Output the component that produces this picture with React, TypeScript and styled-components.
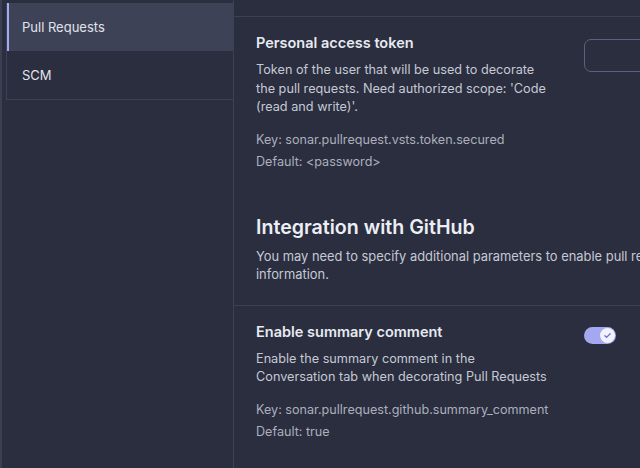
import React from 'react';
import styled, { createGlobalStyle } from 'styled-components';

const GlobalStyle = createGlobalStyle`
  html, body, #root {
    margin: 0;
    height: 100%;
  }
  body {
    background: #2a2e3f;
    font-family: Inter, "Noto Sans", "Liberation Sans", sans-serif;
    -webkit-font-smoothing: antialiased;
    overflow: hidden;
  }
`;

const Page = styled.div`
  display: flex;
  height: 468px;
  background: #2a2e3f;
  border-left: 2px solid #3a3f53;
  box-sizing: border-box;
  overflow: hidden;
`;

const Sidebar = styled.aside`
  width: 231px;
  flex-shrink: 0;
  padding: 3px 0 0 4px;
  box-sizing: border-box;
`;

const NavBox = styled.nav`
  display: flex;
  flex-direction: column;
  border-left: 1px solid #3c4156;
  border-bottom: 1px solid #3c4156;
`;

const NavItem = styled.div<{ $active?: boolean }>`
  height: 48px;
  display: flex;
  align-items: center;
  padding-left: 13px;
  font-size: 13px;
  color: #e1e3eb;
  background: ${p => (p.$active ? '#3d4257' : 'transparent')};
  border-left: 2px solid ${p => (p.$active ? '#a3aaf2' : 'transparent')};
`;

const Main = styled.main`
  flex: 1;
  min-width: 0;
  border-left: 1px solid #3c4156;
  overflow: hidden;
`;

const TopBar = styled.div`
  height: 16px;
  border-bottom: 1px solid #3c4156;
`;

const Setting = styled.section<{ $bordered?: boolean }>`
  display: grid;
  grid-template-columns: 296px 260px;
  column-gap: 32px;
  padding: 16px 0 0 22px;
  border-top: ${p => (p.$bordered ? '1px solid #3c4156' : 'none')};
`;

const SettingText = styled.div`
  display: flex;
  flex-direction: column;
`;

const SettingTitle = styled.h3`
  margin: 0;
  font-size: 14.5px;
  line-height: 20px;
  font-weight: 600;
  color: #e7e9f0;
`;

const Description = styled.p`
  margin: 8px 0 12px;
  font-size: 12.7px;
  line-height: 18.5px;
  color: #c6c9d4;
`;

const Meta = styled.div`
  font-size: 12.6px;
  line-height: 22px;
  color: #acafbc;
  white-space: nowrap;
`;

const TokenInput = styled.input`
  margin-top: 6px;
  height: 33px;
  width: 260px;
  box-sizing: border-box;
  background: transparent;
  border: 1px solid #5c6180;
  border-radius: 7px;
  outline: none;
`;

const Category = styled.div`
  padding: 40px 0 20px 22px;
`;

const CategoryTitle = styled.h2`
  margin: 0;
  font-size: 19.6px;
  line-height: 28px;
  font-weight: 600;
  color: #eceef4;
`;

const CategoryDescription = styled.p`
  margin: 7px 0 0;
  font-size: 12.9px;
  line-height: 18.5px;
  color: #c6c9d4;
  white-space: nowrap;
`;

const Toggle = styled.div<{ $on?: boolean }>`
  margin-top: 5px;
  width: 32px;
  height: 17px;
  border-radius: 9px;
  background: ${p => (p.$on ? '#a3a8f0' : '#5c6180')};
  display: flex;
  align-items: center;
  justify-content: ${p => (p.$on ? 'flex-end' : 'flex-start')};
  padding: 0 1px;
  box-sizing: border-box;
`;

const Knob = styled.span`
  width: 15px;
  height: 15px;
  border-radius: 50%;
  background: #f1f2fc;
  display: flex;
  align-items: center;
  justify-content: center;
`;

export default function App() {
  return (
    <>
      <GlobalStyle />
      <Page>
        <Sidebar>
          <NavBox>
            <NavItem $active>Pull Requests</NavItem>
            <NavItem>SCM</NavItem>
          </NavBox>
        </Sidebar>
        <Main>
          <TopBar />
          <Setting>
            <SettingText>
              <SettingTitle>Personal access token</SettingTitle>
              <Description>
                Token of the user that will be used to decorate the pull requests. Need authorized
                scope: 'Code (read and write)'.
              </Description>
              <Meta>Key: sonar.pullrequest.vsts.token.secured</Meta>
              <Meta>Default: &lt;password&gt;</Meta>
            </SettingText>
            <TokenInput type="password" />
          </Setting>
          <Category>
            <CategoryTitle>Integration with GitHub</CategoryTitle>
            <CategoryDescription>
              You may need to specify additional parameters to enable pull request decoration. See the documentation for more
              <br />
              information.
            </CategoryDescription>
          </Category>
          <Setting $bordered>
            <SettingText>
              <SettingTitle>Enable summary comment</SettingTitle>
              <Description>
                Enable the summary comment in the Conversation tab when decorating Pull Requests
              </Description>
              <Meta>Key: sonar.pullrequest.github.summary_comment</Meta>
              <Meta>Default: true</Meta>
            </SettingText>
            <Toggle $on>
              <Knob>
                <svg width="9" height="9" viewBox="0 0 24 24" fill="none" stroke="#6c72d6" strokeWidth="3.5" strokeLinecap="round" strokeLinejoin="round">
                  <path d="M5 12.5l4.5 4.5L19 7.5" />
                </svg>
              </Knob>
            </Toggle>
          </Setting>
        </Main>
      </Page>
    </>
  );
}
